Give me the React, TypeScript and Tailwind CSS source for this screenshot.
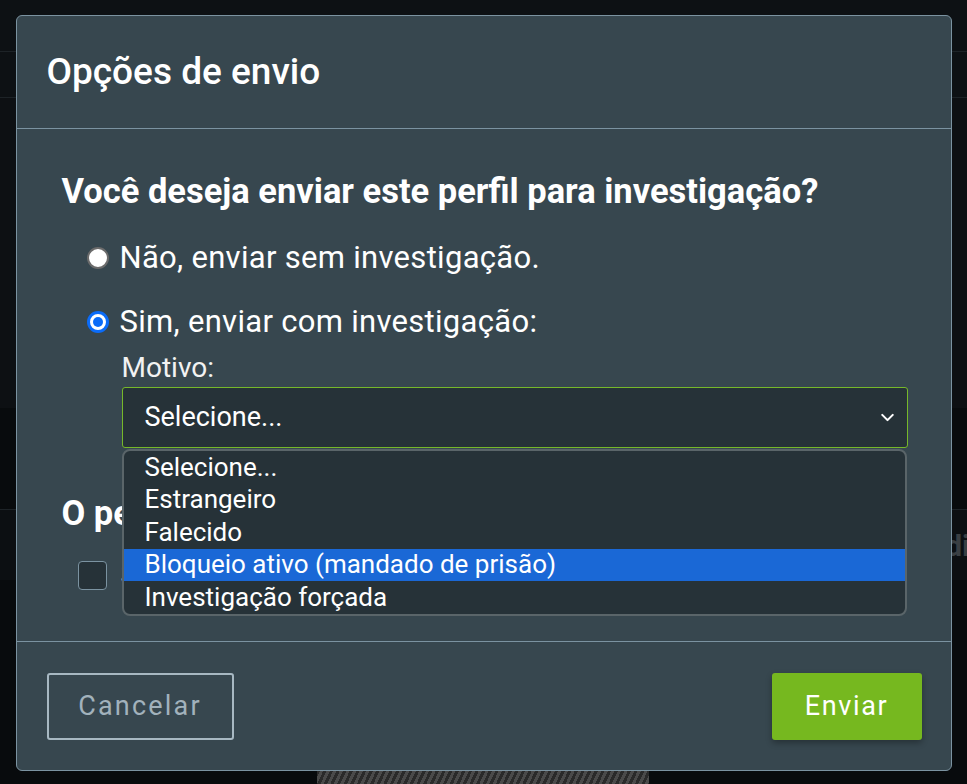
import { ChevronDown } from "lucide-react";

const options = [
  "Selecione...",
  "Estrangeiro",
  "Falecido",
  "Bloqueio ativo (mandado de prisão)",
  "Investigação forçada",
];

function Radio({ checked }: { checked?: boolean }) {
  if (checked) {
    return (
      <span className="flex h-[22px] w-[22px] shrink-0 items-center justify-center rounded-full border-[3px] border-[#0b6cf8] bg-white">
        <span className="h-[10px] w-[10px] rounded-full bg-[#0b6cf8]" />
      </span>
    );
  }
  return <span className="h-[22px] w-[22px] shrink-0 rounded-full border-2 border-[#6b6b6b] bg-white" />;
}

function Backdrop() {
  return (
    <div className="flex h-[784px] flex-col bg-[#090c0e] text-[#3a3f43]">
      <div className="h-[52px] border-b border-[#1d2327] bg-[#0d1114]" />
      <div className="h-[46px] border-b border-[#1d2327] bg-[#0d1114]" />
      <div className="h-[310px] bg-[#0d1013]" />
      <div className="h-[102px] border-b border-[#1d2327] bg-[#080b0d]" />
      <div className="flex h-[70px] items-center justify-end overflow-hidden bg-[#0c0f12] text-[30px] font-bold">
        <span className="-mr-[3px]">Edi</span>
      </div>
      <div className="flex flex-1 items-end justify-center bg-[#080b0d] pr-[1px]">
        <div className="h-[14px] w-[332px] bg-[repeating-linear-gradient(115deg,#2a2a2a_0px,#2a2a2a_3px,#4a4a4a_3px,#4a4a4a_6px)]" />
      </div>
    </div>
  );
}

export default function App() {
  return (
    <div className="relative h-[784px] w-[967px] overflow-hidden font-['Roboto',sans-serif]">
      <Backdrop />

      {/* modal */}
      <div className="absolute inset-0 flex justify-center pt-[15px]">
        <div className="flex h-[756px] w-[936px] flex-col rounded-md border border-[#7b93a1] bg-[#37474f] text-white">
          <div className="flex h-[113px] items-center border-b border-[#7b93a1] px-[30px]">
            <h1 className="text-[37px] font-medium">Opções de envio</h1>
          </div>

          <div className="flex-1 pl-[45px] pr-[43px] pt-[42px]">
            <h2 className="whitespace-nowrap text-[34.5px] leading-[40px] font-bold">
              Você deseja enviar este perfil para investigação?
            </h2>

            <div className="mt-[29px] ml-[25px] flex h-[36px] items-center gap-[11px]">
              <Radio />
              <span className="text-[31px] leading-[36px] tracking-[0.3px]">Não, enviar sem investigação.</span>
            </div>
            <div className="mt-[28px] ml-[25px] flex h-[36px] items-center gap-[11px]">
              <Radio checked />
              <span className="text-[31px] leading-[36px] tracking-[0.3px]">Sim, enviar com investigação:</span>
            </div>

            <div className="relative ml-[60px] mt-[12px]">
              <div className="text-[28px] leading-[32px] text-[#f2f2f2]">Motivo:</div>
              <div className="mt-[3px] flex h-[61px] items-center justify-between rounded-[3px] border border-[#76b82a] bg-[#263238] pl-[22px] pr-[9px]">
                <span className="text-[27px]">Selecione...</span>
                <ChevronDown size={21} strokeWidth={2.4} />
              </div>

              <div className="absolute left-0 right-[1px] top-[97px] z-10 overflow-hidden rounded-lg border-2 border-[#5a6569] bg-[#263238]">
                {options.map((o, i) => (
                  <div
                    key={o}
                    className={
                      "flex h-[32.5px] items-center pl-[21px] text-[26px] " +
                      (i === 3 ? "bg-[#1a68d6]" : "")
                    }
                  >
                    {o}
                  </div>
                ))}
              </div>
            </div>

            <h2 className="mt-[45px] whitespace-nowrap text-[34.5px] leading-[40px] font-bold">
              O perfil contém alguma restrição?
            </h2>
            <div className="mt-[24px] ml-[16px] flex h-[36px] items-center gap-[14px]">
              <span className="h-[29px] w-[29px] shrink-0 rounded-[4px] border border-[#7b93a1] bg-[#263238]" />
              <span className="text-[31px]">Sim, restrição de edição</span>
            </div>
          </div>

          <div className="flex h-[129px] items-center justify-between border-t border-[#7b93a1] pl-[30px] pr-[29px]">
            <button className="h-[67px] w-[187px] rounded-[3px] border-2 border-[#a7b8c2] text-[27px] tracking-[2.2px] text-[#a2b2bc]">
              Cancelar
            </button>
            <button className="h-[67px] w-[150px] rounded-[3px] bg-[#76b81f] text-[27px] tracking-[1.6px] text-white shadow-[0_3px_6px_rgba(0,0,0,0.3)]">
              Enviar
            </button>
          </div>
        </div>
      </div>
    </div>
  );
}
